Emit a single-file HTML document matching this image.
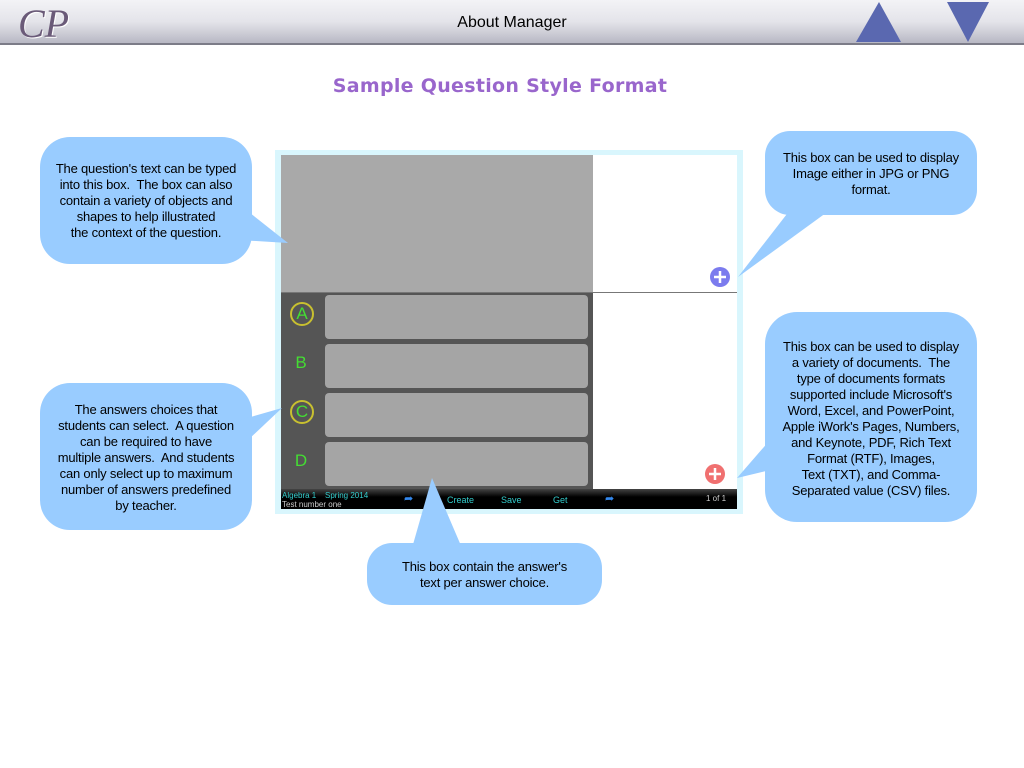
<!DOCTYPE html>
<html><head><style>
body{margin:0;width:1024px;height:768px;background:#fff;position:relative;overflow:hidden;font-family:"Liberation Sans",sans-serif}
.hdr{position:absolute;left:0;top:0;width:1024px;height:43px;background:linear-gradient(#f3f3f6,#e4e4ea 50%,#b8b8c4);border-bottom:2px solid #7c7c88}
.t{position:absolute;font-size:13px;color:#000;text-align:center;line-height:16px;letter-spacing:-0.2px}
.ab{position:absolute;background:#a5a5a5;border-radius:4px;left:325px;width:263px;height:44px}
.l{position:absolute;left:281px;width:40px;text-align:center;color:#44dd33;font-size:17px}
.c{border:2px solid #c8c030;border-radius:50%;width:20px;height:20px;line-height:20px;left:290px}
.tb{position:absolute;color:#33cccc;font-size:8px}
</style></head><body>
<div class="hdr"></div>
<div style="position:absolute;left:18px;top:0px;font:italic 40px 'Liberation Serif',serif;color:#6a5a78;text-shadow:1px 1px 0 #fff">CP</div>
<div style="position:absolute;left:0;width:1024px;top:14px;text-align:center;font-size:16px">About Manager</div>
<svg style="position:absolute;left:0;top:0" width="1024" height="44"><polygon points="856,42 879,2 901,42" fill="#5a68b0"/><polygon points="947,2 989,2 968,42" fill="#5a68b0"/></svg>
<div style="position:absolute;left:0;width:1000px;top:75px;text-align:center;font:bold 19px 'DejaVu Sans',sans-serif;letter-spacing:0.3px;color:#9966cc">Sample Question Style Format</div>

<div style="position:absolute;left:275px;top:150px;width:468px;height:364px;background:#d9f6fd"></div>
<div style="position:absolute;left:281px;top:155px;width:456px;height:354px;background:#fff"></div>
<div style="position:absolute;left:281px;top:155px;width:312px;height:137px;background:#a9a9a9"></div>
<div style="position:absolute;left:281px;top:292px;width:456px;height:1px;background:#777"></div>
<div style="position:absolute;left:281px;top:293px;width:312px;height:196px;background:#555"></div>
<div class="ab" style="top:295px"></div><div class="ab" style="top:344px"></div><div class="ab" style="top:393px"></div><div class="ab" style="top:442px"></div>
<div class="l c" style="top:302px">A</div>
<div class="l" style="top:353px">B</div>
<div class="l c" style="top:400px">C</div>
<div class="l" style="top:451px">D</div>
<div style="position:absolute;left:281px;top:489px;width:456px;height:20px;background:linear-gradient(#444,#000 40%)"></div>
<div class="tb" style="left:282px;top:491px">Algebra 1</div><div class="tb" style="left:325px;top:491px">Spring 2014</div>
<div class="tb" style="left:282px;top:500px;color:#ccc">Test number one</div>
<div class="tb" style="left:447px;top:495px;font-size:9px">Create</div><div class="tb" style="left:501px;top:495px;font-size:9px">Save</div><div class="tb" style="left:553px;top:495px;font-size:9px">Get</div><div class="tb" style="left:706px;top:494px;color:#ccc">1 of 1</div>
<div class="tb" style="left:404px;top:492px;color:#3388ee;font-size:11px">➦</div><div class="tb" style="left:605px;top:492px;color:#3388ee;font-size:11px">➦</div>
<svg style="position:absolute;left:0;top:0" width="1024" height="768">
<circle cx="720" cy="277" r="10" fill="#7b7bee"/><path d="M714 277h12M720 271v12" stroke="#fff" stroke-width="2.5"/>
<circle cx="715" cy="474" r="10" fill="#f07070"/><path d="M709 474h12M715 468v12" stroke="#fff" stroke-width="2.5"/>
<g fill="#99ccff">
<rect x="40" y="137" width="212" height="127" rx="30"/><polygon points="240,205 288,243 240,240"/>
<rect x="765" y="131" width="212" height="84" rx="25"/><polygon points="790,210 738,277 830,210"/>
<rect x="40" y="383" width="212" height="147" rx="30"/><polygon points="240,420 282,408 248,440"/>
<rect x="765" y="312" width="212" height="210" rx="32"/><polygon points="770,440 737,478 770,470"/>
<rect x="367" y="543" width="235" height="62" rx="25"/><polygon points="412,548 432,478 462,548"/>
</g></svg>
<div class="t" style="left:40px;top:161px;width:212px">The question's text can be typed<br>into this box.&nbsp; The box can also<br>contain a variety of objects and<br>shapes to help illustrated<br>the context of the question.</div>
<div class="t" style="left:765px;top:150px;width:212px">This box can be used to display<br>Image either in JPG or PNG<br>format.</div>
<div class="t" style="left:40px;top:402px;width:212px">The answers choices that<br>students can select.&nbsp; A question<br>can be required to have<br>multiple answers.&nbsp; And students<br>can only select up to maximum<br>number of answers predefined<br>by teacher.</div>
<div class="t" style="left:765px;top:339px;width:212px">This box can be used to display<br>a variety of documents.&nbsp; The<br>type of documents formats<br>supported include Microsoft's<br>Word, Excel, and PowerPoint,<br>Apple iWork's Pages, Numbers,<br>and Keynote, PDF, Rich Text<br>Format (RTF), Images,<br>Text (TXT), and Comma-<br>Separated value (CSV) files.</div>
<div class="t" style="left:367px;top:559px;width:235px">This box contain the answer's<br>text per answer choice.</div>
</body></html>
